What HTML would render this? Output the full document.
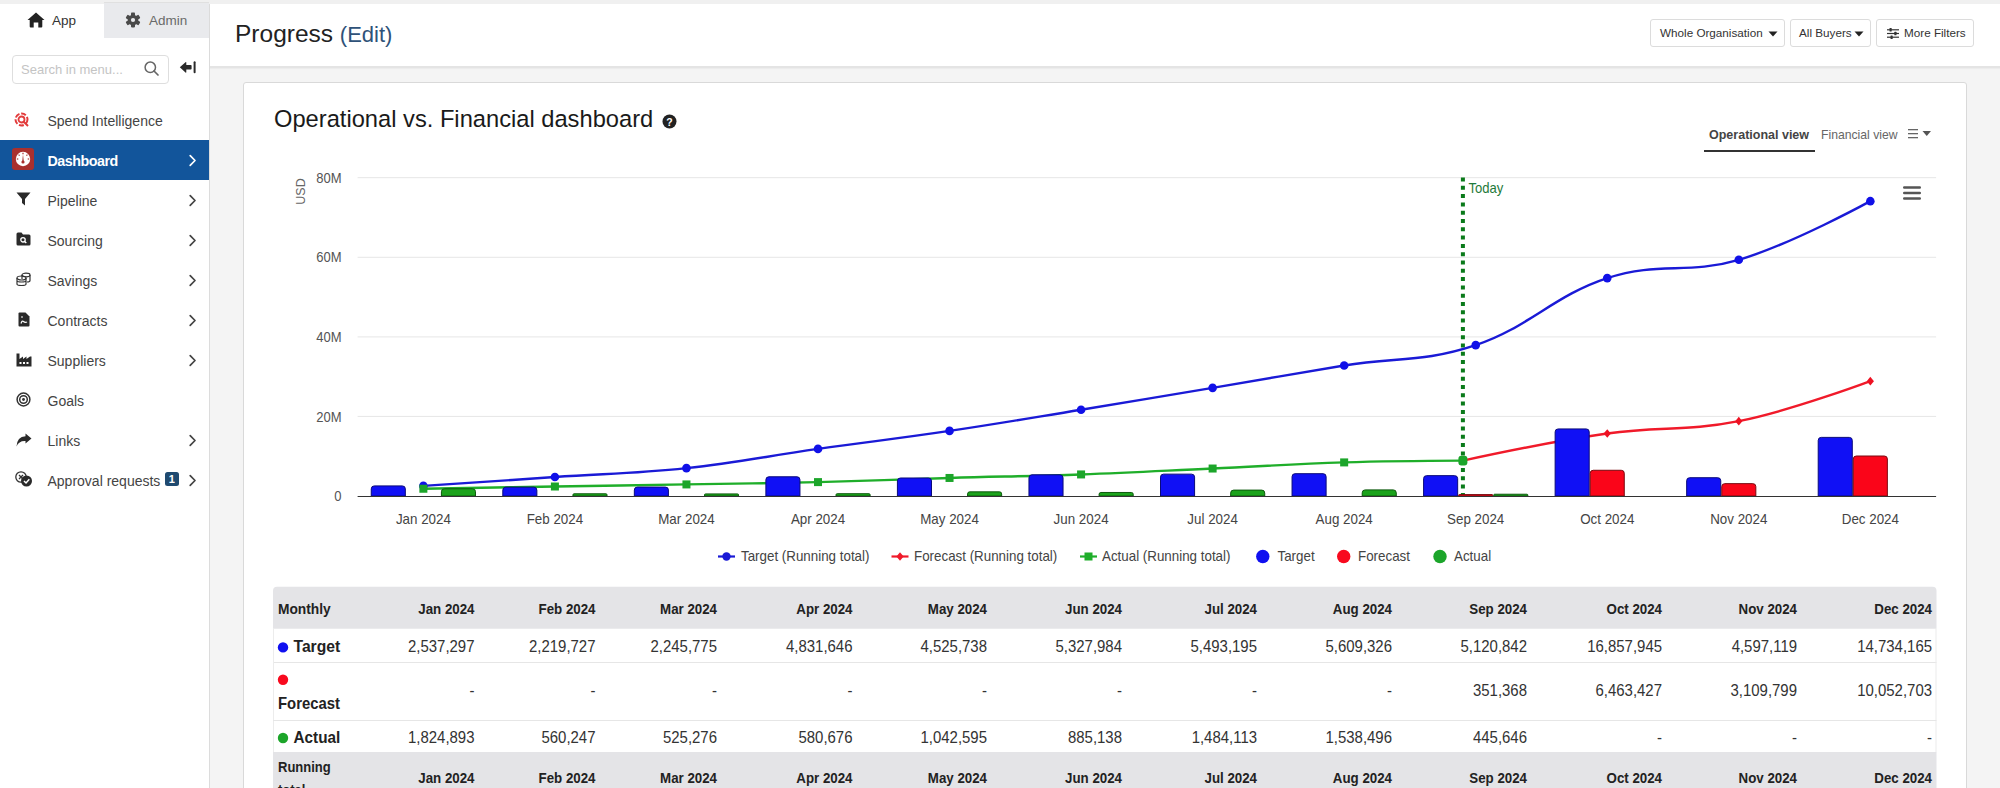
<!DOCTYPE html>
<html><head><meta charset="utf-8">
<style>
*{margin:0;padding:0;box-sizing:border-box}
html,body{width:2000px;height:788px;overflow:hidden;background:#f4f4f4;font-family:"Liberation Sans",sans-serif;color:#333}
.abs{position:absolute}
#topstrip{position:absolute;left:0;top:0;width:2000px;height:3.6px;background:#f0f0f0}
#sidebar{position:absolute;left:0;top:4px;width:210px;height:784px;background:#fff;border-right:1px solid #dcdcdc}
#header{position:absolute;left:210px;top:4px;width:1790px;height:63.5px;background:#fff;border-bottom:2px solid #e4e4e4;box-shadow:0 1px 1px rgba(0,0,0,.03)}
#card{position:absolute;left:242.5px;top:82px;width:1724px;height:760px;background:#fff;border:1px solid #d9d9d9;border-radius:3px}
.item{position:absolute;left:0;width:209px;height:40px}
.item .t{position:absolute;left:47.5px;top:13px;font-size:14px;color:#444;white-space:nowrap;line-height:16px}
.item .chev{position:absolute;left:188px;top:14px}
.item svg.ic{position:absolute}
.btn{position:absolute;top:15px;height:28px;border:1px solid #dcdcdc;border-radius:3px;background:#fff;font-size:11.7px;color:#333;white-space:nowrap;line-height:26px}
</style></head>
<body>
<div id="topstrip"></div>
<div id="sidebar">
  <!-- tabs -->
  <div class="abs" style="left:104px;top:-2px;width:105px;height:36px;background:#e9eaed;border-top:1px solid #e0e0e0"></div>
  <svg class="abs" style="left:27px;top:8px" width="18" height="16" viewBox="0 0 18 16"><path d="M9 0.5 L17.5 8 L15.3 8 L15.3 14.5 Q15.3 15.5 14.3 15.5 L11.3 15.5 L11.3 10.5 L6.7 10.5 L6.7 15.5 L3.7 15.5 Q2.7 15.5 2.7 14.5 L2.7 8 L0.5 8 Z" fill="#222"/></svg>
  <div class="abs" style="left:52px;top:9px;font-size:13.5px;color:#333;line-height:16px">App</div>
  <svg class="abs" style="left:125px;top:8px" width="16" height="16" viewBox="0 0 16 16"><g fill="#4a4a4a"><circle cx="8" cy="8" r="5.3"/><rect x="6" y="0.6" width="4" height="3.6" rx="0.8"/><rect x="6" y="0.6" width="4" height="3.6" rx="0.8" transform="rotate(60 8 8)"/><rect x="6" y="0.6" width="4" height="3.6" rx="0.8" transform="rotate(120 8 8)"/><rect x="6" y="0.6" width="4" height="3.6" rx="0.8" transform="rotate(180 8 8)"/><rect x="6" y="0.6" width="4" height="3.6" rx="0.8" transform="rotate(240 8 8)"/><rect x="6" y="0.6" width="4" height="3.6" rx="0.8" transform="rotate(300 8 8)"/></g><circle cx="8" cy="8" r="2.1" fill="#e9eaed"/></svg>
  <div class="abs" style="left:149px;top:9px;font-size:13.5px;color:#6a6a6a;line-height:16px">Admin</div>
  <!-- search -->
  <div class="abs" style="left:12px;top:50.5px;width:157px;height:29px;border:1px solid #dedede;border-radius:4px;background:#fff"></div>
  <div class="abs" style="left:21px;top:58px;font-size:13px;color:#c4c4c4;line-height:16px">Search in menu...</div>
  <svg class="abs" style="left:143px;top:56px" width="18" height="18" viewBox="0 0 18 18"><circle cx="7.3" cy="7.3" r="5.2" fill="none" stroke="#666" stroke-width="1.5"/><line x1="11" y1="11" x2="15" y2="15" stroke="#666" stroke-width="1.7" stroke-linecap="round"/></svg>
  <svg class="abs" style="left:179px;top:56px" width="18" height="16" viewBox="0 0 18 16"><path d="M0.8 7.3 L6.5 2.2 Q7.3 1.6 7.3 2.6 L7.3 5 L11.8 5 Q12.6 5 12.6 5.8 L12.6 8.8 Q12.6 9.6 11.8 9.6 L7.3 9.6 L7.3 12 Q7.3 13 6.5 12.4 Z" fill="#2a2a2a"/><rect x="14.6" y="1.2" width="2" height="12" rx="1" fill="#2a2a2a"/></svg>

  <div class="item" style="top:96px"><svg class="ic" style="left:14px;top:12px" width="17" height="15" viewBox="0 0 17 15"><circle cx="7.5" cy="7.5" r="6" fill="none" stroke="#e23b3b" stroke-width="2" stroke-dasharray="5 1.8"/><circle cx="7.5" cy="7.5" r="3" fill="none" stroke="#e23b3b" stroke-width="1.8"/><line x1="9.8" y1="9.8" x2="14" y2="14" stroke="#e23b3b" stroke-width="2"/></svg><div class="t">Spend Intelligence</div></div>
<div class="item" style="top:136px;background:#12559b"><svg class="ic" style="left:12px;top:8px" width="22" height="22" viewBox="0 0 22 22"><rect x="0" y="0" width="22" height="22" rx="3" fill="#a8302e"/><circle cx="11" cy="11" r="7.2" fill="#fff"/><g stroke="#a8302e" stroke-width="1.2"><line x1="11" y1="4.8" x2="11" y2="6.3"/><line x1="6.6" y1="6.6" x2="7.6" y2="7.6"/><line x1="15.4" y1="6.6" x2="14.4" y2="7.6"/><line x1="4.8" y1="11" x2="6.3" y2="11"/><line x1="17.2" y1="11" x2="15.7" y2="11"/></g><path d="M10.2 13.5 L11 6.5 L11.8 13.5 Z" fill="#a8302e"/><circle cx="11" cy="14" r="1.6" fill="#a8302e"/></svg><div class="t" style="color:#fff;font-weight:bold;font-size:14.3px;letter-spacing:-0.5px">Dashboard</div><svg class="chev" width="9" height="13" viewBox="0 0 9 13"><path d="M2.2 1.6 L7 6.5 L2.2 11.4" fill="none" stroke="#fff" stroke-width="1.7" stroke-linecap="round" stroke-linejoin="round"/></svg></div>
<div class="item" style="top:176px"><svg class="ic" style="left:16px;top:12px" width="15" height="14" viewBox="0 0 15 14"><path d="M0.5 0.5 L14.5 0.5 L9 7 L9 13.5 L6 11 L6 7 Z" fill="#2a2a2a"/></svg><div class="t">Pipeline</div><svg class="chev" width="9" height="13" viewBox="0 0 9 13"><path d="M2.2 1.6 L7 6.5 L2.2 11.4" fill="none" stroke="#444" stroke-width="1.7" stroke-linecap="round" stroke-linejoin="round"/></svg></div>
<div class="item" style="top:216px"><svg class="ic" style="left:16px;top:12px" width="15" height="14" viewBox="0 0 15 14"><path d="M0.5 2 Q0.5 0.5 2 0.5 L5.5 0.5 L7 2.5 L13 2.5 Q14.5 2.5 14.5 4 L14.5 12 Q14.5 13.5 13 13.5 L2 13.5 Q0.5 13.5 0.5 12 Z" fill="#2a2a2a"/><circle cx="7" cy="7.8" r="2.2" fill="none" stroke="#fff" stroke-width="1.3"/><line x1="8.6" y1="9.4" x2="10.3" y2="11.1" stroke="#fff" stroke-width="1.4"/></svg><div class="t">Sourcing</div><svg class="chev" width="9" height="13" viewBox="0 0 9 13"><path d="M2.2 1.6 L7 6.5 L2.2 11.4" fill="none" stroke="#444" stroke-width="1.7" stroke-linecap="round" stroke-linejoin="round"/></svg></div>
<div class="item" style="top:256px"><svg class="ic" style="left:16px;top:12px" width="15" height="14" viewBox="0 0 15 14"><g fill="none" stroke="#333" stroke-width="1.2"><ellipse cx="10" cy="3" rx="4" ry="1.8"/><path d="M6 3 L6 7 M14 3 L14 8.5 Q14 10 11 10"/><ellipse cx="5.5" cy="6" rx="4.5" ry="2"/><path d="M1 6 L1 12 Q1 13.5 5.5 13.5 Q10 13.5 10 12 L10 6 M1 8.5 Q1 10 5.5 10 Q10 10 10 8.5"/></g></svg><div class="t">Savings</div><svg class="chev" width="9" height="13" viewBox="0 0 9 13"><path d="M2.2 1.6 L7 6.5 L2.2 11.4" fill="none" stroke="#444" stroke-width="1.7" stroke-linecap="round" stroke-linejoin="round"/></svg></div>
<div class="item" style="top:296px"><svg class="ic" style="left:18px;top:12px" width="12" height="15" viewBox="0 0 12 15"><path d="M0.5 1.5 Q0.5 0.5 1.5 0.5 L7.5 0.5 L11.5 4.5 L11.5 13.5 Q11.5 14.5 10.5 14.5 L1.5 14.5 Q0.5 14.5 0.5 13.5 Z" fill="#2a2a2a"/><path d="M3 5 L5 5 M3 11.5 Q4 8 5.5 9.5 Q7 11 9 10" fill="none" stroke="#fff" stroke-width="1.2"/></svg><div class="t">Contracts</div><svg class="chev" width="9" height="13" viewBox="0 0 9 13"><path d="M2.2 1.6 L7 6.5 L2.2 11.4" fill="none" stroke="#444" stroke-width="1.7" stroke-linecap="round" stroke-linejoin="round"/></svg></div>
<div class="item" style="top:336px"><svg class="ic" style="left:16px;top:13px" width="16" height="14" viewBox="0 0 16 14"><path d="M0.5 0.5 L3.5 0.5 L3.5 6 L7 3.5 L7 6 L10.5 3.5 L10.5 6 L14 3.5 L15.5 3.5 L15.5 13.5 L0.5 13.5 Z" fill="#2a2a2a"/><g fill="#fff"><rect x="3.5" y="9" width="2" height="2"/><rect x="7" y="9" width="2" height="2"/><rect x="10.5" y="9" width="2" height="2"/></g></svg><div class="t">Suppliers</div><svg class="chev" width="9" height="13" viewBox="0 0 9 13"><path d="M2.2 1.6 L7 6.5 L2.2 11.4" fill="none" stroke="#444" stroke-width="1.7" stroke-linecap="round" stroke-linejoin="round"/></svg></div>
<div class="item" style="top:376px"><svg class="ic" style="left:16px;top:12px" width="15" height="15" viewBox="0 0 15 15"><circle cx="7.5" cy="7.5" r="6.4" fill="none" stroke="#333" stroke-width="1.5"/><circle cx="7.5" cy="7.5" r="3.8" fill="none" stroke="#333" stroke-width="1.5"/><circle cx="7.5" cy="7.5" r="1.4" fill="#333"/></svg><div class="t">Goals</div></div>
<div class="item" style="top:416px"><svg class="ic" style="left:16px;top:13px" width="16" height="14" viewBox="0 0 16 14"><path d="M15.5 5.5 L9.5 0.5 L9.5 3.3 Q1 3.8 0.5 13.5 Q3 7.5 9.5 8 L9.5 10.5 Z" fill="#2a2a2a"/></svg><div class="t">Links</div><svg class="chev" width="9" height="13" viewBox="0 0 9 13"><path d="M2.2 1.6 L7 6.5 L2.2 11.4" fill="none" stroke="#444" stroke-width="1.7" stroke-linecap="round" stroke-linejoin="round"/></svg></div>
<div class="item" style="top:456px"><svg class="ic" style="left:15px;top:11px" width="18" height="16" viewBox="0 0 18 16"><circle cx="6" cy="6" r="5.2" fill="#fff" stroke="#333" stroke-width="1.3"/><path d="M4 4 L8 8 M8 4 L4 8" stroke="#333" stroke-width="1.3"/><circle cx="11.5" cy="10" r="5.5" fill="#2a2a2a"/><path d="M9 10 L11 12 L14.3 8.2" fill="none" stroke="#fff" stroke-width="1.5"/></svg><div class="t">Approval requests</div><div class="abs" style="left:165px;top:12px;width:13.5px;height:14px;background:#1f4a70;border-radius:2.5px;color:#fff;font-size:11px;font-weight:bold;line-height:14px;text-align:center">1</div><svg class="chev" width="9" height="13" viewBox="0 0 9 13"><path d="M2.2 1.6 L7 6.5 L2.2 11.4" fill="none" stroke="#444" stroke-width="1.7" stroke-linecap="round" stroke-linejoin="round"/></svg></div>
</div>
<div id="header">
  <div class="abs" style="left:25px;top:16px;font-size:24.5px;color:#222;line-height:28px;white-space:nowrap">Progress <span style="font-size:22px;color:#2f5279">(Edit)</span></div>
  <div class="btn" style="left:1440px;width:135px;padding-left:9px">Whole Organisation<svg class="abs" style="left:117px;top:11px" width="10" height="6" viewBox="0 0 10 6"><path d="M0.5 0.5 L9.5 0.5 L5 5.5 Z" fill="#222"/></svg></div>
  <div class="btn" style="left:1580px;width:81px;padding-left:8px">All Buyers<svg class="abs" style="left:63px;top:11px" width="10" height="6" viewBox="0 0 10 6"><path d="M0.5 0.5 L9.5 0.5 L5 5.5 Z" fill="#222"/></svg></div>
  <div class="btn" style="left:1666px;width:98px;padding-left:27px"><svg class="abs" style="left:10px;top:8px" width="12" height="11" viewBox="0 0 12 11"><g fill="#333"><rect x="0" y="1.2" width="12" height="1.2"/><rect x="0" y="4.9" width="12" height="1.2"/><rect x="0" y="8.6" width="12" height="1.2"/><rect x="2.5" y="0" width="2.2" height="3.6" rx="0.5"/><rect x="7.3" y="3.7" width="2.2" height="3.6" rx="0.5"/><rect x="3.5" y="7.4" width="2.2" height="3.6" rx="0.5"/></g></svg>More Filters</div>
</div>
<div id="card"></div>
<div class="abs" style="left:274px;top:104.6px;font-size:23.7px;color:#1a1a1a;line-height:28px;white-space:nowrap">Operational vs. Financial dashboard</div>
<svg class="abs" style="left:662px;top:114px" width="15" height="15" viewBox="0 0 15 15"><circle cx="7.5" cy="7.5" r="7" fill="#222"/><text x="7.5" y="11.5" text-anchor="middle" font-family="Liberation Sans" font-weight="bold" font-size="10.5" fill="#fff">?</text></svg>
<!-- tabs -->
<div class="abs" style="left:1709px;top:127.7px;font-size:12.5px;font-weight:bold;color:#444;line-height:14px;white-space:nowrap">Operational view</div>
<div class="abs" style="left:1703.5px;top:149.5px;width:111.5px;height:2.5px;background:#333"></div>
<div class="abs" style="left:1821px;top:127.7px;font-size:12.2px;color:#666;line-height:14px;white-space:nowrap">Financial view</div>
<svg class="abs" style="left:1907px;top:128px" width="26" height="12" viewBox="0 0 26 12"><g fill="#666"><rect x="1" y="1" width="10" height="1.3"/><rect x="1" y="5" width="10" height="1.3"/><rect x="1" y="9" width="10" height="1.3"/></g><path d="M15.5 3 L24 3 L19.75 8 Z" fill="#555"/></svg>
<svg width="2000" height="788" viewBox="0 0 2000 788" style="position:absolute;left:0;top:0">
<line x1="357.6" x2="1936.1" y1="416.4" y2="416.4" stroke="#e6e6e6" stroke-width="1"/>
<line x1="357.6" x2="1936.1" y1="336.9" y2="336.9" stroke="#e6e6e6" stroke-width="1"/>
<line x1="357.6" x2="1936.1" y1="257.3" y2="257.3" stroke="#e6e6e6" stroke-width="1"/>
<line x1="357.6" x2="1936.1" y1="177.7" y2="177.7" stroke="#e6e6e6" stroke-width="1"/>
<text transform="translate(341.50 182.90) scale(0.91 1)" text-anchor="end" font-family="Liberation Sans" font-size="14.3" font-weight="normal" fill="#555">80M</text>
<text transform="translate(341.50 262.47) scale(0.91 1)" text-anchor="end" font-family="Liberation Sans" font-size="14.3" font-weight="normal" fill="#555">60M</text>
<text transform="translate(341.50 342.05) scale(0.91 1)" text-anchor="end" font-family="Liberation Sans" font-size="14.3" font-weight="normal" fill="#555">40M</text>
<text transform="translate(341.50 421.62) scale(0.91 1)" text-anchor="end" font-family="Liberation Sans" font-size="14.3" font-weight="normal" fill="#555">20M</text>
<text transform="translate(341.50 501.20) scale(0.91 1)" text-anchor="end" font-family="Liberation Sans" font-size="14.3" font-weight="normal" fill="#555">0</text>
<text transform="translate(305,191.5) rotate(-90)" text-anchor="middle" font-family="Liberation Sans" font-size="12.5" fill="#666">USD</text>
<text transform="translate(423.37 523.80) scale(0.935 1)" text-anchor="middle" font-family="Liberation Sans" font-size="14.3" font-weight="normal" fill="#444">Jan 2024</text>
<text transform="translate(554.91 523.80) scale(0.935 1)" text-anchor="middle" font-family="Liberation Sans" font-size="14.3" font-weight="normal" fill="#444">Feb 2024</text>
<text transform="translate(686.45 523.80) scale(0.935 1)" text-anchor="middle" font-family="Liberation Sans" font-size="14.3" font-weight="normal" fill="#444">Mar 2024</text>
<text transform="translate(818.00 523.80) scale(0.935 1)" text-anchor="middle" font-family="Liberation Sans" font-size="14.3" font-weight="normal" fill="#444">Apr 2024</text>
<text transform="translate(949.54 523.80) scale(0.935 1)" text-anchor="middle" font-family="Liberation Sans" font-size="14.3" font-weight="normal" fill="#444">May 2024</text>
<text transform="translate(1081.08 523.80) scale(0.935 1)" text-anchor="middle" font-family="Liberation Sans" font-size="14.3" font-weight="normal" fill="#444">Jun 2024</text>
<text transform="translate(1212.62 523.80) scale(0.935 1)" text-anchor="middle" font-family="Liberation Sans" font-size="14.3" font-weight="normal" fill="#444">Jul 2024</text>
<text transform="translate(1344.16 523.80) scale(0.935 1)" text-anchor="middle" font-family="Liberation Sans" font-size="14.3" font-weight="normal" fill="#444">Aug 2024</text>
<text transform="translate(1475.70 523.80) scale(0.935 1)" text-anchor="middle" font-family="Liberation Sans" font-size="14.3" font-weight="normal" fill="#444">Sep 2024</text>
<text transform="translate(1607.25 523.80) scale(0.935 1)" text-anchor="middle" font-family="Liberation Sans" font-size="14.3" font-weight="normal" fill="#444">Oct 2024</text>
<text transform="translate(1738.79 523.80) scale(0.935 1)" text-anchor="middle" font-family="Liberation Sans" font-size="14.3" font-weight="normal" fill="#444">Nov 2024</text>
<text transform="translate(1870.33 523.80) scale(0.935 1)" text-anchor="middle" font-family="Liberation Sans" font-size="14.3" font-weight="normal" fill="#444">Dec 2024</text>
<line x1="1462.9" x2="1462.9" y1="177.5" y2="495" stroke="#0a7a1a" stroke-width="4" stroke-dasharray="4 4.3"/>
<text transform="translate(1468.50 193.00) scale(0.935 1)" text-anchor="start" font-family="Liberation Sans" font-size="14" font-weight="normal" fill="#1f7a3a">Today</text>
<path d="M 423.37 485.90 C 423.37 485.90 502.30 480.63 554.91 477.07 C 607.53 473.52 633.84 473.77 686.45 468.14 C 739.07 462.51 765.38 456.36 818.00 448.91 C 870.61 441.47 896.92 438.75 949.54 430.91 C 1002.15 423.07 1028.46 418.32 1081.08 409.71 C 1133.70 401.10 1160.00 396.69 1212.62 387.85 C 1265.24 379.02 1291.55 374.07 1344.16 365.53 C 1396.78 357.00 1423.09 362.65 1475.70 345.16 C 1528.32 327.67 1554.63 295.16 1607.25 278.09 C 1659.86 261.01 1686.17 275.18 1738.79 259.80 C 1791.40 244.41 1870.33 201.17 1870.33 201.17" fill="none" stroke="#1a1ad6" stroke-width="2.4"/>
<path d="M 423.37 488.74 C 423.37 488.74 502.30 487.37 554.91 486.51 C 607.53 485.65 633.84 485.30 686.45 484.42 C 739.07 483.54 765.38 483.40 818.00 482.11 C 870.61 480.82 896.92 479.50 949.54 477.96 C 1002.15 476.43 1028.46 476.33 1081.08 474.44 C 1133.70 472.55 1160.00 470.94 1212.62 468.53 C 1265.24 466.13 1291.55 464.07 1344.16 462.41 C 1391.66 460.92 1462.90 460.64 1462.90 460.64" fill="none" stroke="#1fae2a" stroke-width="2.4"/>
<path d="M 1462.90 460.64 C 1462.90 460.64 1549.51 441.79 1607.25 433.53 C 1659.86 426.00 1686.17 431.63 1738.79 421.15 C 1791.40 410.68 1870.33 381.16 1870.33 381.16" fill="none" stroke="#f01a2a" stroke-width="2.4"/>
<circle cx="423.37" cy="485.90" r="4.3" fill="#1010e8"/>
<circle cx="554.91" cy="477.07" r="4.3" fill="#1010e8"/>
<circle cx="686.45" cy="468.14" r="4.3" fill="#1010e8"/>
<circle cx="818.00" cy="448.91" r="4.3" fill="#1010e8"/>
<circle cx="949.54" cy="430.91" r="4.3" fill="#1010e8"/>
<circle cx="1081.08" cy="409.71" r="4.3" fill="#1010e8"/>
<circle cx="1212.62" cy="387.85" r="4.3" fill="#1010e8"/>
<circle cx="1344.16" cy="365.53" r="4.3" fill="#1010e8"/>
<circle cx="1475.70" cy="345.16" r="4.3" fill="#1010e8"/>
<circle cx="1607.25" cy="278.09" r="4.3" fill="#1010e8"/>
<circle cx="1738.79" cy="259.80" r="4.3" fill="#1010e8"/>
<circle cx="1870.33" cy="201.17" r="4.3" fill="#1010e8"/>
<rect x="419.37" y="484.74" width="8" height="8" fill="#1ca52a"/>
<rect x="550.91" y="482.51" width="8" height="8" fill="#1ca52a"/>
<rect x="682.45" y="480.42" width="8" height="8" fill="#1ca52a"/>
<rect x="814.00" y="478.11" width="8" height="8" fill="#1ca52a"/>
<rect x="945.54" y="473.96" width="8" height="8" fill="#1ca52a"/>
<rect x="1077.08" y="470.44" width="8" height="8" fill="#1ca52a"/>
<rect x="1208.62" y="464.53" width="8" height="8" fill="#1ca52a"/>
<rect x="1340.16" y="458.41" width="8" height="8" fill="#1ca52a"/>
<rect x="1458.40" y="455.84" width="9" height="9.6" rx="3" fill="#1ca52a"/>
<path d="M 1607.25 429.23 L 1610.85 433.53 L 1607.25 437.83 L 1603.65 433.53 Z" fill="#ee1122"/>
<path d="M 1738.79 416.85 L 1742.39 421.15 L 1738.79 425.45 L 1735.19 421.15 Z" fill="#ee1122"/>
<path d="M 1870.33 376.86 L 1873.93 381.16 L 1870.33 385.46 L 1866.73 381.16 Z" fill="#ee1122"/>
<path d="M 371.25 496.00 L 371.25 488.90 Q 371.25 485.90 374.25 485.90 L 402.33 485.90 Q 405.33 485.90 405.33 488.90 L 405.33 496.00 Z" fill="#1010f5" stroke="#0a0a7a" stroke-width="1"/>
<path d="M 441.41 496.00 L 441.41 491.74 Q 441.41 488.74 444.41 488.74 L 472.49 488.74 Q 475.49 488.74 475.49 491.74 L 475.49 496.00 Z" fill="#1ca31c" stroke="#0d5a0d" stroke-width="1"/>
<path d="M 502.80 496.00 L 502.80 490.17 Q 502.80 487.17 505.80 487.17 L 533.87 487.17 Q 536.87 487.17 536.87 490.17 L 536.87 496.00 Z" fill="#1010f5" stroke="#0a0a7a" stroke-width="1"/>
<path d="M 572.95 496.00 L 572.95 494.89 Q 572.95 493.77 574.07 493.77 L 605.91 493.77 Q 607.03 493.77 607.03 494.89 L 607.03 496.00 Z" fill="#1ca31c" stroke="#0d5a0d" stroke-width="1"/>
<path d="M 634.34 496.00 L 634.34 490.06 Q 634.34 487.06 637.34 487.06 L 665.42 487.06 Q 668.42 487.06 668.42 490.06 L 668.42 496.00 Z" fill="#1010f5" stroke="#0a0a7a" stroke-width="1"/>
<path d="M 704.49 496.00 L 704.49 494.96 Q 704.49 493.91 705.54 493.91 L 737.53 493.91 Q 738.57 493.91 738.57 494.96 L 738.57 496.00 Z" fill="#1ca31c" stroke="#0d5a0d" stroke-width="1"/>
<path d="M 765.88 496.00 L 765.88 479.78 Q 765.88 476.78 768.88 476.78 L 796.96 476.78 Q 799.96 476.78 799.96 479.78 L 799.96 496.00 Z" fill="#1010f5" stroke="#0a0a7a" stroke-width="1"/>
<path d="M 836.03 496.00 L 836.03 494.84 Q 836.03 493.69 837.19 493.69 L 868.96 493.69 Q 870.11 493.69 870.11 494.84 L 870.11 496.00 Z" fill="#1ca31c" stroke="#0d5a0d" stroke-width="1"/>
<path d="M 897.42 496.00 L 897.42 480.99 Q 897.42 477.99 900.42 477.99 L 928.50 477.99 Q 931.50 477.99 931.50 480.99 L 931.50 496.00 Z" fill="#1010f5" stroke="#0a0a7a" stroke-width="1"/>
<path d="M 967.58 496.00 L 967.58 493.93 Q 967.58 491.85 969.65 491.85 L 999.58 491.85 Q 1001.65 491.85 1001.65 493.93 L 1001.65 496.00 Z" fill="#1ca31c" stroke="#0d5a0d" stroke-width="1"/>
<path d="M 1028.96 496.00 L 1028.96 477.80 Q 1028.96 474.80 1031.96 474.80 L 1060.04 474.80 Q 1063.04 474.80 1063.04 477.80 L 1063.04 496.00 Z" fill="#1010f5" stroke="#0a0a7a" stroke-width="1"/>
<path d="M 1099.12 496.00 L 1099.12 494.24 Q 1099.12 492.48 1100.88 492.48 L 1131.43 492.48 Q 1133.20 492.48 1133.20 494.24 L 1133.20 496.00 Z" fill="#1ca31c" stroke="#0d5a0d" stroke-width="1"/>
<path d="M 1160.50 496.00 L 1160.50 477.14 Q 1160.50 474.14 1163.50 474.14 L 1191.58 474.14 Q 1194.58 474.14 1194.58 477.14 L 1194.58 496.00 Z" fill="#1010f5" stroke="#0a0a7a" stroke-width="1"/>
<path d="M 1230.66 496.00 L 1230.66 493.05 Q 1230.66 490.10 1233.61 490.10 L 1261.79 490.10 Q 1264.74 490.10 1264.74 493.05 L 1264.74 496.00 Z" fill="#1ca31c" stroke="#0d5a0d" stroke-width="1"/>
<path d="M 1292.05 496.00 L 1292.05 476.68 Q 1292.05 473.68 1295.05 473.68 L 1323.12 473.68 Q 1326.12 473.68 1326.12 476.68 L 1326.12 496.00 Z" fill="#1010f5" stroke="#0a0a7a" stroke-width="1"/>
<path d="M 1362.20 496.00 L 1362.20 492.88 Q 1362.20 489.88 1365.20 489.88 L 1393.28 489.88 Q 1396.28 489.88 1396.28 492.88 L 1396.28 496.00 Z" fill="#1ca31c" stroke="#0d5a0d" stroke-width="1"/>
<path d="M 1423.59 496.00 L 1423.59 478.63 Q 1423.59 475.63 1426.59 475.63 L 1454.67 475.63 Q 1457.67 475.63 1457.67 478.63 L 1457.67 496.00 Z" fill="#1010f5" stroke="#0a0a7a" stroke-width="1"/>
<path d="M 1458.67 496.00 L 1458.67 495.30 Q 1458.67 494.60 1459.36 494.60 L 1492.04 494.60 Q 1492.74 494.60 1492.74 495.30 L 1492.74 496.00 Z" fill="#fa0519" stroke="#7a0a10" stroke-width="1"/>
<path d="M 1493.74 496.00 L 1493.74 495.11 Q 1493.74 494.23 1494.63 494.23 L 1526.93 494.23 Q 1527.82 494.23 1527.82 495.11 L 1527.82 496.00 Z" fill="#1ca31c" stroke="#0d5a0d" stroke-width="1"/>
<path d="M 1555.13 496.00 L 1555.13 431.93 Q 1555.13 428.93 1558.13 428.93 L 1586.21 428.93 Q 1589.21 428.93 1589.21 431.93 L 1589.21 496.00 Z" fill="#1010f5" stroke="#0a0a7a" stroke-width="1"/>
<path d="M 1590.21 496.00 L 1590.21 473.28 Q 1590.21 470.28 1593.21 470.28 L 1621.28 470.28 Q 1624.28 470.28 1624.28 473.28 L 1624.28 496.00 Z" fill="#fa0519" stroke="#7a0a10" stroke-width="1"/>
<path d="M 1686.67 496.00 L 1686.67 480.71 Q 1686.67 477.71 1689.67 477.71 L 1717.75 477.71 Q 1720.75 477.71 1720.75 480.71 L 1720.75 496.00 Z" fill="#1010f5" stroke="#0a0a7a" stroke-width="1"/>
<path d="M 1721.75 496.00 L 1721.75 486.63 Q 1721.75 483.63 1724.75 483.63 L 1752.83 483.63 Q 1755.83 483.63 1755.83 486.63 L 1755.83 496.00 Z" fill="#fa0519" stroke="#7a0a10" stroke-width="1"/>
<path d="M 1818.21 496.00 L 1818.21 440.38 Q 1818.21 437.38 1821.21 437.38 L 1849.29 437.38 Q 1852.29 437.38 1852.29 440.38 L 1852.29 496.00 Z" fill="#1010f5" stroke="#0a0a7a" stroke-width="1"/>
<path d="M 1853.29 496.00 L 1853.29 459.00 Q 1853.29 456.00 1856.29 456.00 L 1884.37 456.00 Q 1887.37 456.00 1887.37 459.00 L 1887.37 496.00 Z" fill="#fa0519" stroke="#7a0a10" stroke-width="1"/>
<rect x="357.6" y="496" width="1578.5" height="1" fill="#333"/>
<rect x="1903" y="186.2" width="18" height="2.6" rx="1.2" fill="#555"/>
<rect x="1903" y="191.7" width="18" height="2.6" rx="1.2" fill="#555"/>
<rect x="1903" y="197.2" width="18" height="2.6" rx="1.2" fill="#555"/>
<line x1="718" x2="735" y1="556.5" y2="556.5" stroke="#1a1ad6" stroke-width="2.2"/><circle cx="726.5" cy="556.5" r="4.2" fill="#1a1ad6"/>
<text transform="translate(741.00 561.20) scale(0.935 1)" text-anchor="start" font-family="Liberation Sans" font-size="14.3" font-weight="normal" fill="#444">Target (Running total)</text>
<line x1="891.5" x2="908.5" y1="556.5" y2="556.5" stroke="#f01a2a" stroke-width="2.2"/><path d="M 900.0 552.2 L 903.6 556.5 L 900.0 560.8 L 896.4 556.5 Z" fill="#f01a2a"/>
<text transform="translate(914.00 561.20) scale(0.935 1)" text-anchor="start" font-family="Liberation Sans" font-size="14.3" font-weight="normal" fill="#444">Forecast (Running total)</text>
<line x1="1080" x2="1097" y1="556.5" y2="556.5" stroke="#1fae2a" stroke-width="2.2"/><rect x="1084.5" y="552.5" width="8" height="8" fill="#1fae2a"/>
<text transform="translate(1102.00 561.20) scale(0.935 1)" text-anchor="start" font-family="Liberation Sans" font-size="14.3" font-weight="normal" fill="#444">Actual (Running total)</text>
<circle cx="1262.8" cy="556.5" r="6.7" fill="#1010f0"/>
<text transform="translate(1277.50 561.20) scale(0.935 1)" text-anchor="start" font-family="Liberation Sans" font-size="14.3" font-weight="normal" fill="#444">Target</text>
<circle cx="1343.7" cy="556.5" r="6.7" fill="#f80a1e"/>
<text transform="translate(1358.00 561.20) scale(0.935 1)" text-anchor="start" font-family="Liberation Sans" font-size="14.3" font-weight="normal" fill="#444">Forecast</text>
<circle cx="1440" cy="556.5" r="6.7" fill="#1ca52a"/>
<text transform="translate(1454.00 561.20) scale(0.935 1)" text-anchor="start" font-family="Liberation Sans" font-size="14.3" font-weight="normal" fill="#444">Actual</text>
</svg>
<svg width="2000" height="788" style="position:absolute;left:0;top:0">
<path d="M 273 628.8 L 273 590.8 Q 273 586.8 277 586.8 L 1932.5 586.8 Q 1936.5 586.8 1936.5 590.8 L 1936.5 628.8 Z" fill="#e4e4e7"/>
<rect x="273" y="662" width="1663.5" height="1" fill="#e6e6e6"/>
<rect x="273" y="628.8" width="1" height="123.5" fill="#ececec"/>
<rect x="1935.5" y="628.8" width="1" height="123.5" fill="#ececec"/>
<rect x="273" y="720" width="1663.5" height="1" fill="#e6e6e6"/>
<rect x="273" y="752" width="1663.5" height="40" fill="#e4e4e7"/>
<text transform="translate(278.00 614.30) scale(0.9 1)" text-anchor="start" font-family="Liberation Sans" font-size="15.3" font-weight="bold" fill="#222">Monthly</text>
<text transform="translate(474.50 614.30) scale(0.87 1)" text-anchor="end" font-family="Liberation Sans" font-size="15.3" font-weight="bold" fill="#222">Jan 2024</text><text transform="translate(595.50 614.30) scale(0.87 1)" text-anchor="end" font-family="Liberation Sans" font-size="15.3" font-weight="bold" fill="#222">Feb 2024</text><text transform="translate(717.00 614.30) scale(0.87 1)" text-anchor="end" font-family="Liberation Sans" font-size="15.3" font-weight="bold" fill="#222">Mar 2024</text><text transform="translate(852.50 614.30) scale(0.87 1)" text-anchor="end" font-family="Liberation Sans" font-size="15.3" font-weight="bold" fill="#222">Apr 2024</text><text transform="translate(987.00 614.30) scale(0.87 1)" text-anchor="end" font-family="Liberation Sans" font-size="15.3" font-weight="bold" fill="#222">May 2024</text><text transform="translate(1122.00 614.30) scale(0.87 1)" text-anchor="end" font-family="Liberation Sans" font-size="15.3" font-weight="bold" fill="#222">Jun 2024</text><text transform="translate(1257.00 614.30) scale(0.87 1)" text-anchor="end" font-family="Liberation Sans" font-size="15.3" font-weight="bold" fill="#222">Jul 2024</text><text transform="translate(1392.00 614.30) scale(0.87 1)" text-anchor="end" font-family="Liberation Sans" font-size="15.3" font-weight="bold" fill="#222">Aug 2024</text><text transform="translate(1527.00 614.30) scale(0.87 1)" text-anchor="end" font-family="Liberation Sans" font-size="15.3" font-weight="bold" fill="#222">Sep 2024</text><text transform="translate(1662.00 614.30) scale(0.87 1)" text-anchor="end" font-family="Liberation Sans" font-size="15.3" font-weight="bold" fill="#222">Oct 2024</text><text transform="translate(1797.00 614.30) scale(0.87 1)" text-anchor="end" font-family="Liberation Sans" font-size="15.3" font-weight="bold" fill="#222">Nov 2024</text><text transform="translate(1932.00 614.30) scale(0.87 1)" text-anchor="end" font-family="Liberation Sans" font-size="15.3" font-weight="bold" fill="#222">Dec 2024</text>
<circle cx="283" cy="647.4" r="5.2" fill="#1010f0"/>
<text transform="translate(293.50 651.80) scale(0.98 1)" text-anchor="start" font-family="Liberation Sans" font-size="16" font-weight="bold" fill="#222">Target</text>
<text transform="translate(474.50 651.80) scale(0.89 1)" text-anchor="end" font-family="Liberation Sans" font-size="16.8" font-weight="normal" fill="#333">2,537,297</text><text transform="translate(595.50 651.80) scale(0.89 1)" text-anchor="end" font-family="Liberation Sans" font-size="16.8" font-weight="normal" fill="#333">2,219,727</text><text transform="translate(717.00 651.80) scale(0.89 1)" text-anchor="end" font-family="Liberation Sans" font-size="16.8" font-weight="normal" fill="#333">2,245,775</text><text transform="translate(852.50 651.80) scale(0.89 1)" text-anchor="end" font-family="Liberation Sans" font-size="16.8" font-weight="normal" fill="#333">4,831,646</text><text transform="translate(987.00 651.80) scale(0.89 1)" text-anchor="end" font-family="Liberation Sans" font-size="16.8" font-weight="normal" fill="#333">4,525,738</text><text transform="translate(1122.00 651.80) scale(0.89 1)" text-anchor="end" font-family="Liberation Sans" font-size="16.8" font-weight="normal" fill="#333">5,327,984</text><text transform="translate(1257.00 651.80) scale(0.89 1)" text-anchor="end" font-family="Liberation Sans" font-size="16.8" font-weight="normal" fill="#333">5,493,195</text><text transform="translate(1392.00 651.80) scale(0.89 1)" text-anchor="end" font-family="Liberation Sans" font-size="16.8" font-weight="normal" fill="#333">5,609,326</text><text transform="translate(1527.00 651.80) scale(0.89 1)" text-anchor="end" font-family="Liberation Sans" font-size="16.8" font-weight="normal" fill="#333">5,120,842</text><text transform="translate(1662.00 651.80) scale(0.89 1)" text-anchor="end" font-family="Liberation Sans" font-size="16.8" font-weight="normal" fill="#333">16,857,945</text><text transform="translate(1797.00 651.80) scale(0.89 1)" text-anchor="end" font-family="Liberation Sans" font-size="16.8" font-weight="normal" fill="#333">4,597,119</text><text transform="translate(1932.00 651.80) scale(0.89 1)" text-anchor="end" font-family="Liberation Sans" font-size="16.8" font-weight="normal" fill="#333">14,734,165</text>
<circle cx="283" cy="679.8" r="5.2" fill="#f80a1e"/>
<text transform="translate(278.00 709.40) scale(0.93 1)" text-anchor="start" font-family="Liberation Sans" font-size="16" font-weight="bold" fill="#222">Forecast</text>
<text transform="translate(474.50 695.60) scale(0.89 1)" text-anchor="end" font-family="Liberation Sans" font-size="16.8" font-weight="normal" fill="#333">-</text><text transform="translate(595.50 695.60) scale(0.89 1)" text-anchor="end" font-family="Liberation Sans" font-size="16.8" font-weight="normal" fill="#333">-</text><text transform="translate(717.00 695.60) scale(0.89 1)" text-anchor="end" font-family="Liberation Sans" font-size="16.8" font-weight="normal" fill="#333">-</text><text transform="translate(852.50 695.60) scale(0.89 1)" text-anchor="end" font-family="Liberation Sans" font-size="16.8" font-weight="normal" fill="#333">-</text><text transform="translate(987.00 695.60) scale(0.89 1)" text-anchor="end" font-family="Liberation Sans" font-size="16.8" font-weight="normal" fill="#333">-</text><text transform="translate(1122.00 695.60) scale(0.89 1)" text-anchor="end" font-family="Liberation Sans" font-size="16.8" font-weight="normal" fill="#333">-</text><text transform="translate(1257.00 695.60) scale(0.89 1)" text-anchor="end" font-family="Liberation Sans" font-size="16.8" font-weight="normal" fill="#333">-</text><text transform="translate(1392.00 695.60) scale(0.89 1)" text-anchor="end" font-family="Liberation Sans" font-size="16.8" font-weight="normal" fill="#333">-</text><text transform="translate(1527.00 695.60) scale(0.89 1)" text-anchor="end" font-family="Liberation Sans" font-size="16.8" font-weight="normal" fill="#333">351,368</text><text transform="translate(1662.00 695.60) scale(0.89 1)" text-anchor="end" font-family="Liberation Sans" font-size="16.8" font-weight="normal" fill="#333">6,463,427</text><text transform="translate(1797.00 695.60) scale(0.89 1)" text-anchor="end" font-family="Liberation Sans" font-size="16.8" font-weight="normal" fill="#333">3,109,799</text><text transform="translate(1932.00 695.60) scale(0.89 1)" text-anchor="end" font-family="Liberation Sans" font-size="16.8" font-weight="normal" fill="#333">10,052,703</text>
<circle cx="283" cy="738" r="5.2" fill="#1ca52a"/>
<text transform="translate(293.50 742.60) scale(0.957 1)" text-anchor="start" font-family="Liberation Sans" font-size="16" font-weight="bold" fill="#222">Actual</text>
<text transform="translate(474.50 742.60) scale(0.89 1)" text-anchor="end" font-family="Liberation Sans" font-size="16.8" font-weight="normal" fill="#333">1,824,893</text><text transform="translate(595.50 742.60) scale(0.89 1)" text-anchor="end" font-family="Liberation Sans" font-size="16.8" font-weight="normal" fill="#333">560,247</text><text transform="translate(717.00 742.60) scale(0.89 1)" text-anchor="end" font-family="Liberation Sans" font-size="16.8" font-weight="normal" fill="#333">525,276</text><text transform="translate(852.50 742.60) scale(0.89 1)" text-anchor="end" font-family="Liberation Sans" font-size="16.8" font-weight="normal" fill="#333">580,676</text><text transform="translate(987.00 742.60) scale(0.89 1)" text-anchor="end" font-family="Liberation Sans" font-size="16.8" font-weight="normal" fill="#333">1,042,595</text><text transform="translate(1122.00 742.60) scale(0.89 1)" text-anchor="end" font-family="Liberation Sans" font-size="16.8" font-weight="normal" fill="#333">885,138</text><text transform="translate(1257.00 742.60) scale(0.89 1)" text-anchor="end" font-family="Liberation Sans" font-size="16.8" font-weight="normal" fill="#333">1,484,113</text><text transform="translate(1392.00 742.60) scale(0.89 1)" text-anchor="end" font-family="Liberation Sans" font-size="16.8" font-weight="normal" fill="#333">1,538,496</text><text transform="translate(1527.00 742.60) scale(0.89 1)" text-anchor="end" font-family="Liberation Sans" font-size="16.8" font-weight="normal" fill="#333">445,646</text><text transform="translate(1662.00 742.60) scale(0.89 1)" text-anchor="end" font-family="Liberation Sans" font-size="16.8" font-weight="normal" fill="#333">-</text><text transform="translate(1797.00 742.60) scale(0.89 1)" text-anchor="end" font-family="Liberation Sans" font-size="16.8" font-weight="normal" fill="#333">-</text><text transform="translate(1932.00 742.60) scale(0.89 1)" text-anchor="end" font-family="Liberation Sans" font-size="16.8" font-weight="normal" fill="#333">-</text>
<text transform="translate(278.00 772.30) scale(0.85 1)" text-anchor="start" font-family="Liberation Sans" font-size="15.3" font-weight="bold" fill="#222">Running</text>
<text transform="translate(278.00 794.50) scale(0.85 1)" text-anchor="start" font-family="Liberation Sans" font-size="15.3" font-weight="bold" fill="#222">total</text>
<text transform="translate(474.50 783.40) scale(0.87 1)" text-anchor="end" font-family="Liberation Sans" font-size="15.3" font-weight="bold" fill="#222">Jan 2024</text><text transform="translate(595.50 783.40) scale(0.87 1)" text-anchor="end" font-family="Liberation Sans" font-size="15.3" font-weight="bold" fill="#222">Feb 2024</text><text transform="translate(717.00 783.40) scale(0.87 1)" text-anchor="end" font-family="Liberation Sans" font-size="15.3" font-weight="bold" fill="#222">Mar 2024</text><text transform="translate(852.50 783.40) scale(0.87 1)" text-anchor="end" font-family="Liberation Sans" font-size="15.3" font-weight="bold" fill="#222">Apr 2024</text><text transform="translate(987.00 783.40) scale(0.87 1)" text-anchor="end" font-family="Liberation Sans" font-size="15.3" font-weight="bold" fill="#222">May 2024</text><text transform="translate(1122.00 783.40) scale(0.87 1)" text-anchor="end" font-family="Liberation Sans" font-size="15.3" font-weight="bold" fill="#222">Jun 2024</text><text transform="translate(1257.00 783.40) scale(0.87 1)" text-anchor="end" font-family="Liberation Sans" font-size="15.3" font-weight="bold" fill="#222">Jul 2024</text><text transform="translate(1392.00 783.40) scale(0.87 1)" text-anchor="end" font-family="Liberation Sans" font-size="15.3" font-weight="bold" fill="#222">Aug 2024</text><text transform="translate(1527.00 783.40) scale(0.87 1)" text-anchor="end" font-family="Liberation Sans" font-size="15.3" font-weight="bold" fill="#222">Sep 2024</text><text transform="translate(1662.00 783.40) scale(0.87 1)" text-anchor="end" font-family="Liberation Sans" font-size="15.3" font-weight="bold" fill="#222">Oct 2024</text><text transform="translate(1797.00 783.40) scale(0.87 1)" text-anchor="end" font-family="Liberation Sans" font-size="15.3" font-weight="bold" fill="#222">Nov 2024</text><text transform="translate(1932.00 783.40) scale(0.87 1)" text-anchor="end" font-family="Liberation Sans" font-size="15.3" font-weight="bold" fill="#222">Dec 2024</text>
</svg>
</body></html>
